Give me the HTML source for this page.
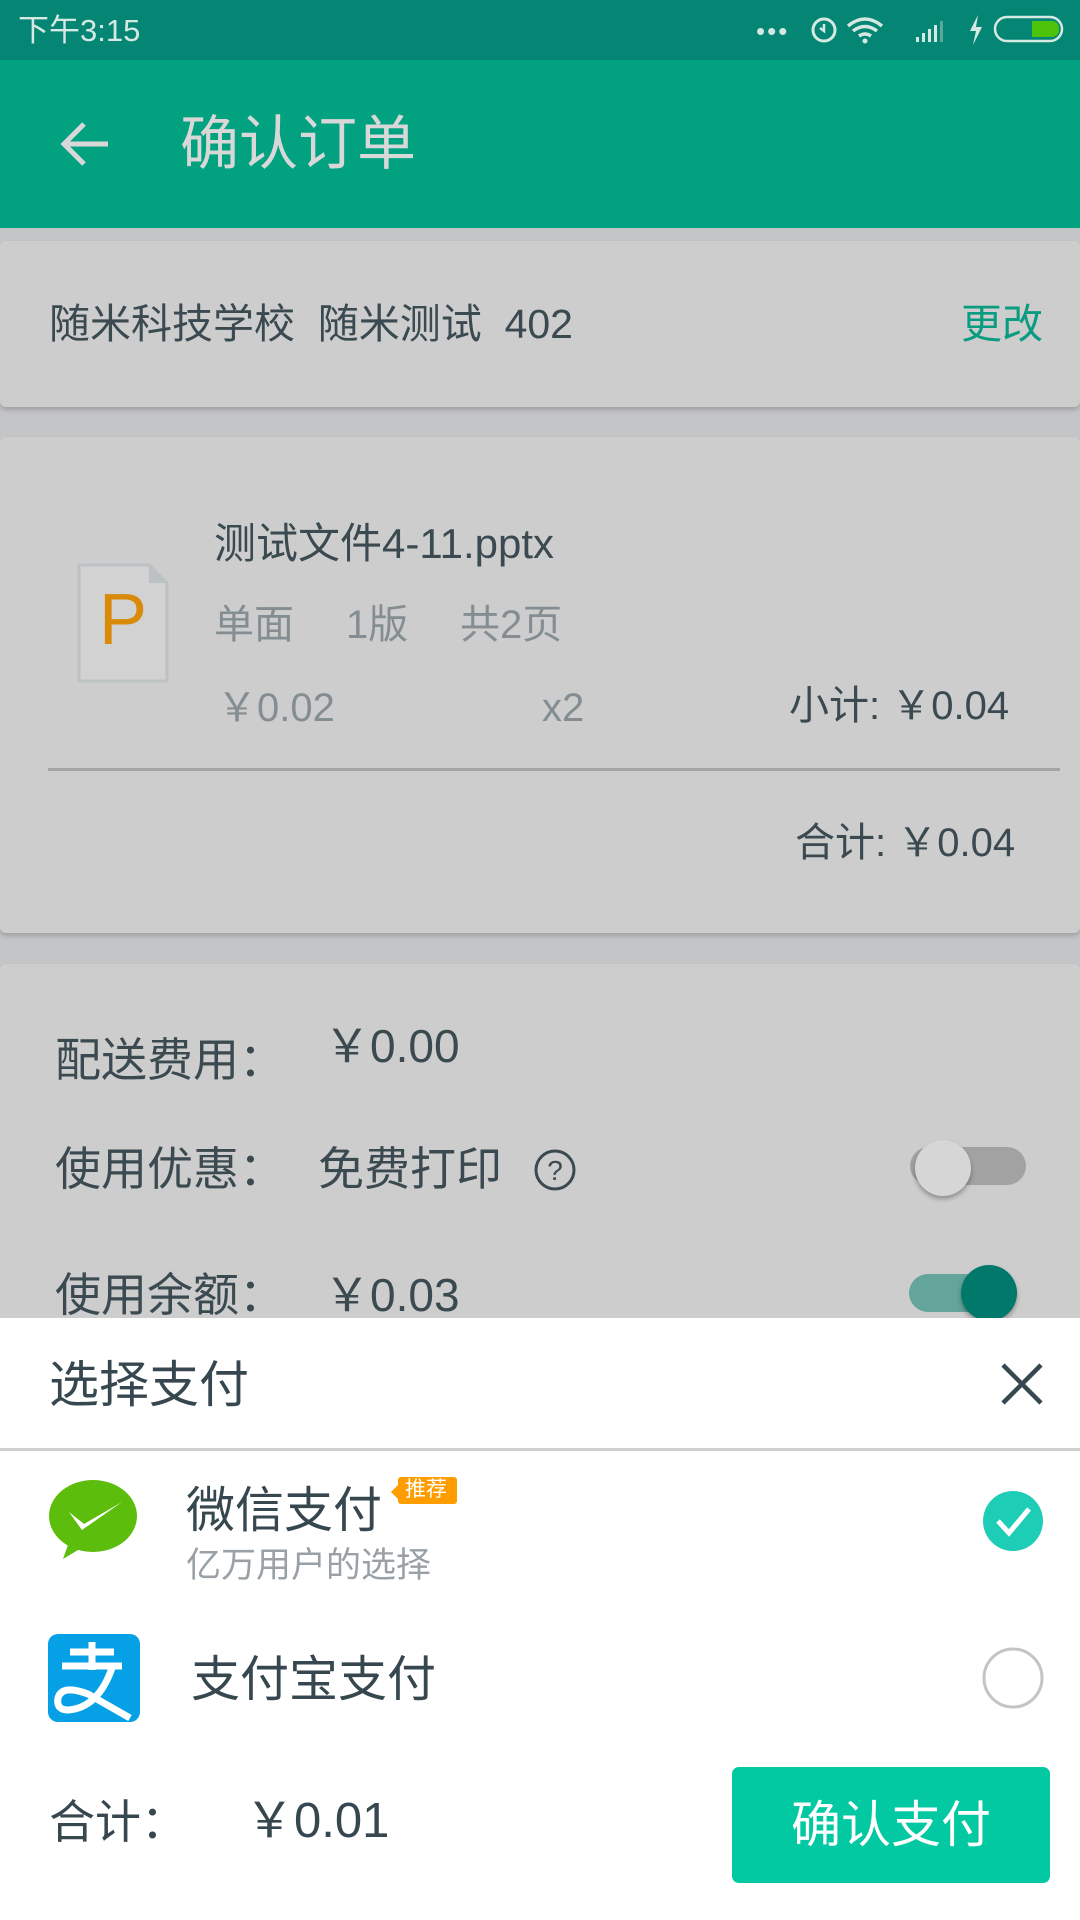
<!DOCTYPE html>
<html><head><meta charset="utf-8"><style>
*{margin:0;padding:0;box-sizing:border-box}
body{width:1080px;height:1920px;overflow:hidden;background:#c4c5c7;font-family:"Liberation Sans","Noto Sans CJK SC",sans-serif;color:#3a4a50;position:relative}
.a{position:absolute;white-space:nowrap}
.card{position:absolute;left:0;width:1080px;background:#cdcdcd;border-radius:6px;box-shadow:0 3px 5px rgba(0,0,0,.18)}
.t{line-height:1}
</style></head><body>
<div class="a" style="left:0;top:0;width:1080px;height:60px;background:#058574"></div>
<div class="a t" style="left:18px;top:15px;font-size:31px;color:#d6e8e2">下午3:15</div>
<div class="a t" style="left:756px;top:18px;font-size:26px;color:#d6e8e2;letter-spacing:2px">•••</div>
<svg class="a" style="left:806px;top:12px" width="262" height="36" viewBox="0 0 262 36">
<circle cx="18" cy="18" r="11" fill="none" stroke="#d6e8e2" stroke-width="3"/><path d="M18 12v7l-4 -3" stroke="#d6e8e2" stroke-width="2.5" fill="none"/>
<path d="M42 14q17-14 34 0M47 19q12-9 24 0M53 24q6-4 12 0" stroke="#d6e8e2" stroke-width="3.5" fill="none"/><circle cx="59" cy="29" r="2.5" fill="#d6e8e2"/>
<path d="M110 30h3v-5h-3zM116 30h3v-9h-3zM122 30h3v-13h-3zM128 30h3v-17h-3z" fill="#d6e8e2"/><path d="M134 30h3v-21h-3z" fill="#5aa898"/>
<path d="M172 3l-8 16h6l-3 14 9-18h-6z" fill="#d6e8e2"/>
<rect x="189" y="5" width="67" height="24" rx="12" fill="none" stroke="#d6e8e2" stroke-width="2.5"/><path d="M226 9h20a7 7 0 0 1 7 8a7 7 0 0 1-7 8h-20z" fill="#4cc20a"/>
</svg>
<div class="a" style="left:0;top:60px;width:1080px;height:168px;background:#02a180"></div>
<svg class="a" style="left:58px;top:120px" width="52" height="48" viewBox="0 0 52 48"><path d="M50 24H6M26 4L6 24l20 20" stroke="#d8d8d8" stroke-width="5" fill="none"/></svg>
<div class="a t" style="left:180px;top:115px;font-size:59px;color:#d8d8d8">确认订单</div>

<div class="card" style="top:241px;height:166px"></div>
<div class="a t" style="left:49px;top:304px;font-size:41px">随米科技学校&nbsp; 随米测试&nbsp; 402</div>
<div class="a t" style="left:961px;top:304px;font-size:41px;color:#0a9c80">更改</div>

<div class="card" style="top:437px;height:496px"></div>
<svg class="a" style="left:76px;top:562px" width="94" height="122" viewBox="0 0 94 122"><path d="M3 3h70l18 18v98H3z" fill="#d2d2d2" stroke="#bcc2c4" stroke-width="3" stroke-linejoin="round"/><path d="M73 3v18h18z" fill="#bcc2c4"/></svg>
<div class="a t" style="left:99px;top:584px;font-size:72px;color:#d88a08">P</div>
<div class="a t" style="left:214px;top:523px;font-size:42px">测试文件4-11.pptx</div>
<div class="a t" style="left:214px;top:605px;font-size:40px;color:#848e92">单面</div>
<div class="a t" style="left:346px;top:605px;font-size:40px;color:#848e92">1版</div>
<div class="a t" style="left:460px;top:605px;font-size:40px;color:#848e92">共2页</div>
<div class="a t" style="left:217px;top:688px;font-size:40px;color:#848e92">￥0.02</div>
<div class="a t" style="left:542px;top:688px;font-size:40px;color:#848e92">x2</div>
<div class="a t" style="left:789px;top:686px;font-size:40px">小计: ￥0.04</div>
<div class="a" style="left:48px;top:768px;width:1012px;height:3px;background:#a3a5a6"></div>
<div class="a t" style="left:795px;top:823px;font-size:40px">合计: ￥0.04</div>

<div class="card" style="top:964px;height:400px"></div>
<div class="a t" style="left:55px;top:1037px;font-size:46px">配送费用：</div>
<div class="a t" style="left:324px;top:1023px;font-size:46px">￥0.00</div>
<div class="a t" style="left:55px;top:1146px;font-size:46px">使用优惠：</div>
<div class="a t" style="left:318px;top:1146px;font-size:46px">免费打印</div>
<svg class="a" style="left:533px;top:1148px" width="44" height="44"><circle cx="22" cy="22" r="19" fill="none" stroke="#3a4a50" stroke-width="3"/><text x="22" y="32" text-anchor="middle" font-size="28" fill="#3a4a50" font-family="Liberation Sans">?</text></svg>
<div class="a" style="left:910px;top:1147px;width:116px;height:38px;border-radius:19px;background:#a2a2a2"></div>
<div class="a" style="left:915px;top:1140px;width:56px;height:56px;border-radius:50%;background:#d6d6d6;box-shadow:0 3px 5px rgba(0,0,0,.3)"></div>
<div class="a t" style="left:55px;top:1272px;font-size:46px">使用余额：</div>
<div class="a t" style="left:324px;top:1272px;font-size:46px">￥0.03</div>
<div class="a" style="left:909px;top:1274px;width:108px;height:38px;border-radius:19px;background:#63a49b"></div>
<div class="a" style="left:961px;top:1265px;width:56px;height:56px;border-radius:50%;background:#00786a;box-shadow:0 3px 5px rgba(0,0,0,.3)"></div>

<div class="a" style="left:0;top:1318px;width:1080px;height:602px;background:#fff"></div>
<div class="a t" style="left:49px;top:1360px;font-size:50px;color:#37474f">选择支付</div>
<svg class="a" style="left:1000px;top:1362px" width="44" height="44"><path d="M3 3l38 38M41 3L3 41" stroke="#37474f" stroke-width="4.5"/></svg>
<div class="a" style="left:0;top:1448px;width:1080px;height:3px;background:#cfcfcf"></div>

<svg class="a" style="left:47px;top:1480px" width="92" height="80" viewBox="0 0 92 80"><ellipse cx="46" cy="36" rx="44" ry="36" fill="#5dbd0c"/><path d="M22 62l-6 17 20-12z" fill="#5dbd0c"/><path d="M22 32l13 18 40-28-38 22z" fill="#fff"/></svg>
<div class="a t" style="left:186px;top:1487px;font-size:49px;color:#37474f">微信支付</div>
<div class="a" style="left:398px;top:1477px;width:59px;height:27px;background:#ff9c00;border-radius:3px"></div>
<div class="a" style="left:391px;top:1485px;border:7px solid transparent;border-right-color:#ff9c00;border-left:0"></div>
<div class="a t" style="left:405px;top:1479px;font-size:21px;color:#fff">推荐</div>
<div class="a t" style="left:186px;top:1548px;font-size:35px;color:#9aa1a6">亿万用户的选择</div>
<svg class="a" style="left:982px;top:1490px" width="62" height="62"><circle cx="31" cy="31" r="30" fill="#1ecdb6"/><path d="M16 31l11 12 20-24" stroke="#fff" stroke-width="5" fill="none"/></svg>

<svg class="a" style="left:48px;top:1634px" width="92" height="88" viewBox="0 0 92 88"><rect width="92" height="88" rx="10" fill="#06a0e6"/><path d="M22 18h44M14 32h60M44 8v28M64 34q-14 40-44 42q-12 0-10-12q4-14 30-4l42 24" stroke="#fff" stroke-width="7" fill="none"/></svg>
<div class="a t" style="left:191px;top:1656px;font-size:49px;color:#37474f">支付宝支付</div>
<svg class="a" style="left:982px;top:1647px" width="62" height="62"><circle cx="31" cy="31" r="29" fill="none" stroke="#c4c4c4" stroke-width="3"/></svg>

<div class="a t" style="left:49px;top:1799px;font-size:46px;color:#37474f">合计：</div>
<div class="a t" style="left:245px;top:1797px;font-size:49px;color:#37474f">￥0.01</div>
<div class="a" style="left:732px;top:1767px;width:318px;height:116px;background:#02c9a1;border-radius:7px"></div>
<div class="a t" style="left:732px;top:1800px;width:318px;text-align:center;font-size:50px;color:#fff">确认支付</div>
</body></html>
